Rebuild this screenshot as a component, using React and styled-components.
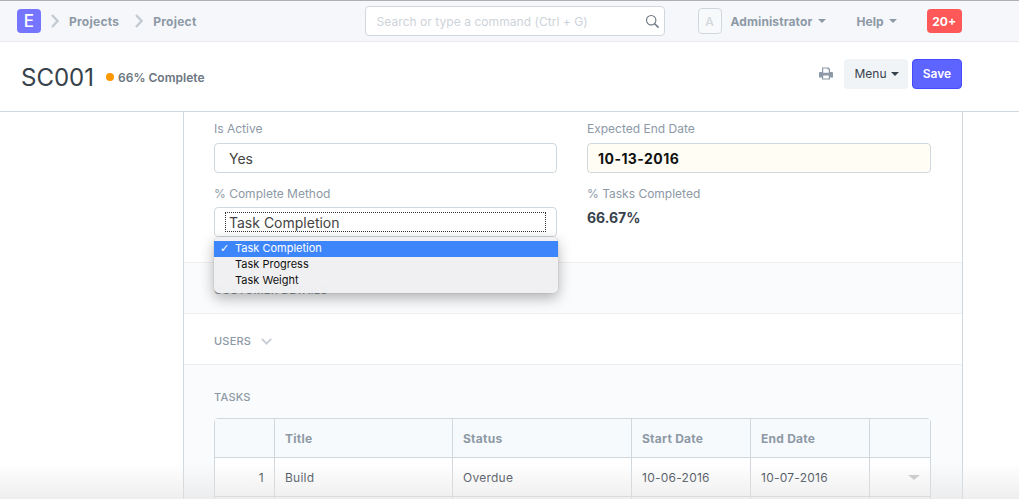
import React from 'react';
import styled, { createGlobalStyle } from 'styled-components';

const GlobalStyle = createGlobalStyle`
html, body {
    margin:0;
    padding:0;
    height:499px;
    overflow:hidden;
    background:#fff;
    font-family:Inter, "Liberation Sans", sans-serif;
    color:#36414c;
}
*{
    box-sizing:border-box;
}
`

const Page = styled.div`
position:relative;
width:1019px;
height:499px;
overflow:hidden;
`

const Navbar = styled.div`
display:flex;
align-items:center;
height:42px;
background:#f5f7fa;
border-top:1px solid #b0b0b0;
border-bottom:1px solid #e8ebf0;
padding-left:17px;
`

const Logo = styled.div`
width:24px;
height:24px;
border-radius:4px;
background:#7575ff;
color:#fff;
font-size:17px;
font-weight:500;
display:flex;
align-items:center;
justify-content:center;
`

const Crumb = styled.div`
display:flex;
align-items:center;
color:#8d99a6;
font-size:12px;
font-weight:700;
letter-spacing:0.25px;
margin-left:${props => props.first ? '10px' : '16px'};
gap:10px;
`

const SearchBox = styled.div`
display:flex;
align-items:center;
justify-content:space-between;
width:300px;
height:30px;
margin-left:168px;
padding:0 4px 0 11px;
background:#fff;
border:1px solid #d1d8dd;
border-radius:4px;
color:#cdd3da;
font-size:12px;
letter-spacing:0.05px;
`

const Avatar = styled.div`
width:24px;
height:26px;
margin-left:33px;
border:1px solid #d1d8dd;
border-radius:4px;
background:#f8f9fb;
color:#d1d8dd;
font-size:12px;
font-weight:500;
display:flex;
align-items:center;
justify-content:center;
`

const NavItem = styled.div`
display:flex;
align-items:center;
gap:${props => props.space}px;
color:#8d99a6;
font-size:12px;
font-weight:700;
letter-spacing:0.1px;
margin-left:${props => props.gap}px;
`

const Caret = styled.span`
display:inline-block;
width:0;
height:0;
border-left:${props => props.size || 4}px solid transparent;
border-right:${props => props.size || 4}px solid transparent;
border-top:${props => props.size ? props.size - 1 : 4}px solid ${props => props.color || '#8d99a6'};
`

const Badge = styled.div`
width:35px;
height:24px;
margin-left:30px;
border-radius:4px;
background:#ff5858;
color:#fff;
font-size:12px;
font-weight:700;
display:flex;
align-items:center;
justify-content:center;
`

const PageHead = styled.div`
display:flex;
align-items:center;
height:70px;
padding:0 57px 0 21px;
background:#fff;
border-bottom:1px solid #d1d8dd;
`

const Title = styled.div`
font-size:24px;
font-weight:400;
color:#36414c;
padding-top:2px;
`

const Indicator = styled.div`
display:flex;
align-items:center;
gap:4px;
margin-left:12px;
font-size:12px;
font-weight:600;
letter-spacing:0.02px;
color:#6c7680;
padding-top:1px;
&::before{
    content:'';
    width:8px;
    height:8px;
    border-radius:4px;
    background:#ff9800;
}
`

const Actions = styled.div`
display:flex;
align-items:center;
margin-left:auto;
margin-bottom:6px;
`

const MenuButton = styled.div`
display:flex;
align-items:center;
gap:4px;
height:30px;
width:64px;
margin-left:11px;
padding-left:1px;
justify-content:center;
background:#f0f4f7;
border-radius:4px;
font-size:12px;
color:#36414c;
`

const SaveButton = styled.div`
display:flex;
align-items:center;
justify-content:center;
width:50px;
height:30px;
margin-left:4px;
background:#5e64ff;
border:1px solid #444bff;
border-radius:4px;
color:#fff;
font-size:12px;
font-weight:600;
`

const Panel = styled.div`
position:relative;
width:780px;
margin-left:183px;
border-left:1px solid #d1d8dd;
border-right:1px solid #d1d8dd;
`

const FormSection = styled.div`
display:grid;
grid-template-columns:343px 344px;
column-gap:30px;
row-gap:13px;
align-content:start;
height:151px;
padding:9px 30px 0;
border-bottom:1px solid #ebeff2;
`

const Field = styled.div`
position:relative;
display:flex;
flex-direction:column;
`

const Label = styled.div`
height:${props => props.tall ? 22 : 21}px;
font-size:12px;
line-height:15px;
color:#8d99a6;
`

const Input = styled.div`
display:flex;
align-items:center;
height:30px;
padding-left:${props => props.indent}px;
background:${props => props.bg || '#fff'};
border:1px solid #d1d8dd;
border-radius:4px;
font-size:14px;
font-weight:${props => props.strong ? 700 : 400};
letter-spacing:${props => props.strong ? '0.45px' : '0'};
color:${props => props.strong ? '#111' : '#444'};
`

const FocusText = styled.span`
display:block;
width:321px;
height:20px;
line-height:19px;
margin-left:10px;
padding-left:3px;
border:1px dotted #333;
`

const ReadOnly = styled.div`
height:30px;
font-size:14px;
font-weight:700;
line-height:18px;
padding-top:2px;
color:#36414c;
`

const NativeMenu = styled.div`
position:absolute;
left:0;
right:-1px;
top:51px;
height:56px;
padding:4px 0;
background:rgba(239,240,242,0.97);
border-radius:5px;
box-shadow:0 0 1px rgba(0,0,0,0.4), 0 5px 14px rgba(0,0,0,0.3);
z-index:2;
`

const MenuRow = styled.div`
position:relative;
height:16px;
line-height:15px;
padding-left:21px;
font-size:11px;
color:${props => props.active ? '#fff' : '#111'};
background:${props => props.active ? '#3d85fb' : 'transparent'};
`

const Tick = styled.span`
position:absolute;
left:6px;
top:0;
font-size:11px;
font-weight:700;
font-family:"DejaVu Sans", sans-serif;
`

const Section = styled.div`
height:${props => props.height}px;
padding:${props => props.top}px 30px 0;
background:${props => props.bg || '#fff'};
border-bottom:${props => props.last ? 'none' : '1px solid #ebeff2'};
`

const SectionHead = styled.div`
display:flex;
align-items:center;
gap:10px;
height:14px;
font-size:11px;
font-weight:500;
letter-spacing:0.2px;
color:#8d99a6;
`

const TableGrid = styled.div`
width:717px;
margin-top:14px;
border:1px solid #d1d8dd;
border-radius:4px 4px 0 0;
background:#fff;
`

const Row = styled.div`
display:grid;
grid-template-columns:60px 178px 179px 119px 119px 1fr;
height:39px;
background:${props => props.head ? '#f7fafc' : '#fff'};
border-bottom:1px solid #d1d8dd;
`

const Cell = styled.div`
display:flex;
align-items:center;
justify-content:${props => props.right ? 'flex-end' : 'flex-start'};
padding:0 10px;
border-right:${props => props.end ? 'none' : '1px solid #d1d8dd'};
font-size:12px;
font-weight:${props => props.head ? 700 : 400};
letter-spacing:0.25px;
color:${props => props.head ? '#8d99a6' : '#36414c'};
`

const BottomFade = styled.div`
position:absolute;
left:0;
right:0;
bottom:0;
height:36px;
background:linear-gradient(to bottom, rgba(225,225,225,0), rgba(225,225,225,0.55));
pointer-events:none;
z-index:3;
`

const Chevron = () => (
    <svg width="8" height="14" viewBox="0 0 8 14" fill="none">
        <path d="M1 1 L6.6 7 L1 13" stroke="#c3cad2" strokeWidth="2.3" />
    </svg>
)

const DownChevron = () => (
    <svg width="11" height="7" viewBox="0 0 11 7" fill="none">
        <path d="M0.8 0.8 L5.5 5.6 L10.2 0.8" stroke="#c8ced6" strokeWidth="1.9" />
    </svg>
)

const SearchIcon = () => (
    <svg width="15" height="15" viewBox="0 0 15 15" fill="none">
        <circle cx="6.2" cy="6.2" r="4.7" stroke="#6c7680" strokeWidth="1.1" />
        <path d="M9.7 9.7 L13.6 13.6" stroke="#6c7680" strokeWidth="1.5" />
    </svg>
)

const PrintIcon = () => (
    <svg width="14" height="13" viewBox="0 0 14 13">
        <path fill="#8d99a6" fillRule="evenodd" d="M3 0.5 H9.6 L11 2 V5 H13 Q14 5 14 6 V10.5 H11 V12.5 H3 V10.5 H0 V6 Q0 5 1 5 H3 Z M4.2 1.6 V5.8 H9.8 V2.6 H8.6 V1.6 Z M4.2 8.6 V11.4 H9.8 V8.6 Z" />
    </svg>
)

const tasks = [
    { idx: 1, title: 'Build', status: 'Overdue', start: '10-06-2016', end: '10-07-2016' },
]

const App = () => {
    return (
        <Page>
            <GlobalStyle />
            <Navbar>
                <Logo>E</Logo>
                <Crumb first><Chevron />Projects</Crumb>
                <Crumb><Chevron />Project</Crumb>
                <SearchBox>
                    Search or type a command (Ctrl + G)
                    <SearchIcon />
                </SearchBox>
                <Avatar>A</Avatar>
                <NavItem gap={9} space={6}>Administrator <Caret /></NavItem>
                <NavItem gap={30} space={5}>Help <Caret /></NavItem>
                <Badge>20+</Badge>
            </Navbar>
            <PageHead>
                <Title>SC001</Title>
                <Indicator>66% Complete</Indicator>
                <Actions>
                    <PrintIcon />
                    <MenuButton>Menu <Caret color="#36414c" /></MenuButton>
                    <SaveButton>Save</SaveButton>
                </Actions>
            </PageHead>
            <Panel>
                <FormSection>
                    <Field>
                        <Label tall>Is Active</Label>
                        <Input indent={14}>Yes</Input>
                    </Field>
                    <Field>
                        <Label tall>Expected End Date</Label>
                        <Input indent={10} bg="#fffdf4" strong>10-13-2016</Input>
                    </Field>
                    <Field>
                        <Label>% Complete Method</Label>
                        <Input><FocusText>Task Completion</FocusText></Input>
                        <NativeMenu>
                            <MenuRow active><Tick>✓</Tick>Task Completion</MenuRow>
                            <MenuRow>Task Progress</MenuRow>
                            <MenuRow>Task Weight</MenuRow>
                        </NativeMenu>
                    </Field>
                    <Field>
                        <Label>% Tasks Completed</Label>
                        <ReadOnly>66.67%</ReadOnly>
                    </Field>
                </FormSection>
                <Section height={51} top={20} bg="#fafbfc">
                    <SectionHead>CUSTOMER DETAILS</SectionHead>
                </Section>
                <Section height={51} top={20}>
                    <SectionHead>USERS <DownChevron /></SectionHead>
                </Section>
                <Section height={140} top={25} bg="#fafbfd" last>
                    <SectionHead>TASKS</SectionHead>
                    <TableGrid>
                        <Row head>
                            <Cell head></Cell>
                            <Cell head>Title</Cell>
                            <Cell head>Status</Cell>
                            <Cell head>Start Date</Cell>
                            <Cell head>End Date</Cell>
                            <Cell head end></Cell>
                        </Row>
                        {tasks.map(task => (
                            <Row key={task.idx}>
                                <Cell right>{task.idx}</Cell>
                                <Cell>{task.title}</Cell>
                                <Cell>{task.status}</Cell>
                                <Cell>{task.start}</Cell>
                                <Cell>{task.end}</Cell>
                                <Cell end right><Caret size={6} color="#c8c8c8" /></Cell>
                            </Row>
                        ))}
                        <Row>
                            <Cell></Cell>
                            <Cell></Cell>
                            <Cell></Cell>
                            <Cell></Cell>
                            <Cell></Cell>
                            <Cell end></Cell>
                        </Row>
                    </TableGrid>
                </Section>
            </Panel>
            <BottomFade />
        </Page>
    );
}

export default App;
